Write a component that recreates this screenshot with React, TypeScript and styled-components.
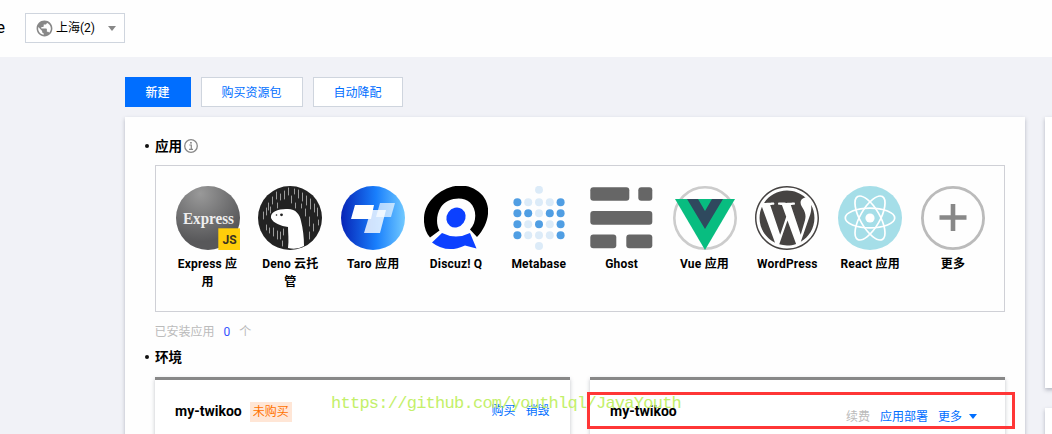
import React from 'react';
import styled, { createGlobalStyle } from 'styled-components';
import { MdPublic } from 'react-icons/md';
import { FaWordpress } from 'react-icons/fa';

const GlobalStyle = createGlobalStyle`
  * { box-sizing: border-box; }
  body {
    margin: 0;
    background: #f1f2f7;
    color: #000;
    font: 12px/18px Roboto, "Noto Sans CJK SC", sans-serif;
    overflow: hidden;
  }
`;

const Page = styled.div`
  position: relative;
  width: 1052px;
  height: 434px;
  overflow: hidden;
`;

const Header = styled.header`
  display: flex;
  align-items: center;
  height: 57px;
  padding-bottom: 1px;
  background: #fefefe;
`;

const ProductName = styled.div`
  display: flex;
  justify-content: flex-end;
  width: 5px;
  margin-right: 20px;
  font-size: 16px;
  font-weight: 400;
  white-space: nowrap;
`;

const RegionSelect = styled.div`
  display: flex;
  align-items: center;
  width: 100px;
  height: 30px;
  padding: 0 8px 0 9px;
  border: 1px solid #cfd5de;
  background: #fff;
  svg { flex: none; color: #888; }
  span { margin-left: 2px; white-space: nowrap; }
`;

const Caret = styled.i<{ $color: string }>`
  width: 0;
  height: 0;
  margin-left: auto;
  border: 4.5px solid transparent;
  border-top: 5px solid ${(p) => p.$color};
  border-bottom: 0;
`;

const Content = styled.main`
  padding: 20px 0 0 125px;
`;

const Toolbar = styled.div`
  display: flex;
  gap: 10px;
  height: 30px;
  margin-bottom: 10px;
`;

const Button = styled.button<{ $primary?: boolean; $width: number }>`
  width: ${(p) => p.$width}px;
  height: 30px;
  padding: 2px 1px 0 0;
  border: 1px solid ${(p) => (p.$primary ? '#006eff' : '#cfd5de')};
  background: ${(p) => (p.$primary ? '#006eff' : '#fff')};
  color: ${(p) => (p.$primary ? '#fff' : '#006eff')};
  font: inherit;
  font-weight: ${(p) => (p.$primary ? 500 : 400)};
`;

const Columns = styled.div`
  display: flex;
  gap: 20px;
`;

const Panel = styled.section`
  flex: none;
  width: 900px;
  height: 400px;
  padding: 19px 20px 0;
  background: #fefefe;
  box-shadow: 0 2px 4px rgba(54, 58, 80, 0.32);
`;

const SideColumn = styled.aside`
  display: flex;
  flex-direction: column;
  flex: none;
  gap: 20px;
`;

const SideCard = styled.div`
  width: 260px;
  height: 271px;
  background: #fff;
  box-shadow: 0 2px 4px rgba(54, 58, 80, 0.32);
`;

const SectionTitle = styled.h3`
  display: flex;
  align-items: center;
  height: 20px;
  margin: 0;
  font-size: 13.6px;
  font-weight: 700;
  &::before {
    content: '';
    width: 4px;
    height: 4px;
    margin-right: 6px;
    border-radius: 50%;
    background: #111;
  }
  svg { margin-left: 2px; }
`;

const AppGrid = styled.div`
  display: flex;
  justify-content: space-between;
  height: 147px;
  margin: 9px 0 0 10px;
  padding: 20px 19px 0 19.55px;
  width: 850px;
  border: 1px solid #cfd0d6;
`;

const AppItem = styled.div`
  width: 64px;
  text-align: center;
  font-weight: 700;
  letter-spacing: 0.2px;
  svg { display: block; width: 64px; height: 64px; margin-bottom: 5px; letter-spacing: 0; }
`;

const Installed = styled.div`
  display: flex;
  gap: 9px;
  margin: 11px 0 6px 9.5px;
  color: #bbb;
  b { color: #3454ff; font-weight: 400; }
`;

const EnvList = styled.div`
  display: flex;
  gap: 20px;
  margin: 10px 0 0 10px;
`;

const EnvCard = styled.article`
  display: flex;
  align-items: flex-start;
  width: 415px;
  height: 130px;
  padding: 22px 20px 0;
  border-top: 3px solid #888;
  background: #fff;
  box-shadow: 0 2px 4px rgba(54, 58, 80, 0.3);
`;

const EnvName = styled.strong`
  font-size: 14px;
  line-height: 19px;
`;

const Tag = styled.span`
  height: 20px;
  margin-left: 8px;
  padding: 0 3px;
  background: #ffe6d6;
  color: #ff7200;
  line-height: 20px;
`;

const Actions = styled.div<{ $drop: number; $right?: number }>`
  display: flex;
  align-items: center;
  gap: 10px;
  margin: ${(p) => p.$drop}px ${(p) => p.$right ?? 0}px 0 auto;
`;

const Action = styled.a<{ $disabled?: boolean }>`
  display: flex;
  align-items: center;
  gap: 7px;
  color: ${(p) => (p.$disabled ? '#bbb' : '#006eff')};
  i { margin-bottom: 2px; }
`;

const Highlight = styled.div`
  position: absolute;
  left: 587px;
  top: 392px;
  width: 428px;
  height: 37px;
  border: 3px solid #ff3636;
`;

const Watermark = styled.div`
  position: absolute;
  left: 331px;
  top: 394px;
  color: #c3f06a;
  font: 17px/20px "Liberation Mono", monospace;
  letter-spacing: -0.74px;
  white-space: nowrap;
`;

const InfoIcon = () => (
  <svg width="14" height="14" viewBox="0 0 14 14" fill="none" stroke="#888">
    <circle cx="7" cy="7" r="6.3" strokeWidth="1.3" />
    <path d="M5.3 6H7.3V10.3M5 10.3H9" strokeWidth="1.2" />
    <rect x="6.1" y="3" width="1.7" height="1.6" fill="#888" stroke="none" />
  </svg>
);

const ExpressIcon = () => (
  <svg viewBox="0 0 64 64">
    <defs>
      <radialGradient id="express" cx="0.38" cy="0.12" r="0.75">
        <stop offset="0" stopColor="#999" />
        <stop offset="1" stopColor="#58585a" />
      </radialGradient>
    </defs>
    <circle cx="32" cy="32" r="32" fill="url(#express)" />
    <text x="32.5" y="37.8" textAnchor="middle" textLength="51" lengthAdjust="spacingAndGlyphs" fontFamily="Liberation Serif" fontSize="16" fontWeight="700" fill="#eee">Express</text>
    <rect x="42.3" y="42.3" width="21.7" height="21.7" fill="#ffce0a" />
    <text x="53.5" y="58" textAnchor="middle" fontFamily="Roboto" fontSize="12" fontWeight="700" fill="#3a3320">JS</text>
  </svg>
);

const rain = [
  [30, 2, 9], [26, 5, 13], [33, 10, 17], [40, 4, 12], [44, 7, 15], [48, 10, 19], [22, 8, 14], [18, 6, 13],
  [19, 17, 22], [14, 11, 18], [10, 17, 24], [8, 22, 29], [5, 26, 33], [12, 21, 27], [15, 42, 50], [19, 45, 53],
  [22, 46, 53], [8, 39, 44], [25, 43, 49], [11, 42, 47], [24, 55, 60], [36, 3, 8], [52, 13, 23], [51, 31, 40],
  [56, 18, 26], [59, 22, 30], [47, 23, 30], [55, 38, 45], [60, 34, 39], [51, 46, 53], [37, 17, 22], [43, 18, 22],
];

const DenoIcon = () => (
  <svg viewBox="0 0 64 64">
    <circle cx="32" cy="32" r="32" fill="#222" />
    {rain.map(([x, a, b]) => (
      <path key={`${x}-${a}`} d={`M${x + 0.5} ${a}V${b}`} stroke="#bbb" strokeWidth="0.8" strokeLinecap="round" />
    ))}
    <path d="M30 62C31 54 30 47 30 41C23 40 15 37 13 32C12 26 20 23 28 23C37 22 42 28 43 35C45 43 46 51 46 60Q39 64 30 62Z" fill="#fff" />
    <circle cx="23.5" cy="28.8" r="1.4" fill="#222" />
    <circle cx="18.5" cy="29" r="0.8" fill="#222" />
  </svg>
);

const TaroIcon = () => (
  <svg viewBox="0 0 64 64">
    <defs>
      <linearGradient id="taro">
        <stop offset="0" stopColor="#0724b6" />
        <stop offset="0.55" stopColor="#197ffc" />
        <stop offset="1" stopColor="#71c9ff" />
      </linearGradient>
    </defs>
    <circle cx="32" cy="32" r="32" fill="url(#taro)" />
    <path d="M14 19H33L30 33H10Z" fill="#fff" />
    <path d="M39 17H54L50 31H35Z" fill="#fff" opacity=".65" />
    <path d="M30 24H45L39 47H23Z" fill="#fff" opacity=".8" />
  </svg>
);

const DiscuzIcon = () => (
  <svg viewBox="0 0 64 64">
    <path d="M6 51.5C-3 41-2 22 9 12C22-1 40-4 52 4C69 14 67 36 53 51L46 43.5C53 36 53 23 46 16.5C38 9 22 13 17 21C12 29 12 39 15.5 44.5Z" fill="#000" />
    <ellipse cx="32" cy="31.5" rx="9.3" ry="10.3" transform="rotate(35 32 31.5)" fill="#0c40ff" />
    <path d="M8 56.5L18 47Q32 54 46 47L52.5 62.5L41 59.5Q23 68 8 56.5Z" fill="#0c40ff" />
  </svg>
);

const darkDots = ['0-0', '0-4', '1-0', '1-1', '1-3', '1-4', '2-0', '2-2', '2-4', '3-0', '3-4'];

const MetabaseIcon = () => (
  <svg viewBox="0 0 64 64">
    <circle cx="32" cy="3.8" r="4" fill="#dcebf8" />
    <circle cx="32" cy="60" r="4" fill="#dcebf8" />
    {[0, 1, 2, 3].map((r) =>
      [0, 1, 2, 3, 4].map((c) => (
        <circle key={`${r}-${c}`} cx={10.4 + c * 10.8} cy={16.2 + r * 11} r="4" fill={darkDots.includes(`${r}-${c}`) ? '#509ee3' : '#dcebf8'} />
      )),
    )}
  </svg>
);

const GhostIcon = () => (
  <svg viewBox="0 0 64 64" fill="#666">
    <rect x="0.3" y="1.3" width="39" height="13.5" rx="3" />
    <rect x="48.3" y="1.3" width="14" height="13.5" rx="3" />
    <rect x="0.3" y="25" width="62" height="13.7" rx="3" />
    <rect x="0.3" y="48.5" width="26" height="13.7" rx="3" />
    <rect x="36.3" y="48.5" width="26" height="13.7" rx="3" />
  </svg>
);

const VueIcon = () => (
  <svg viewBox="0 0 64 64">
    <circle cx="32" cy="32" r="30.7" fill="none" stroke="#ccc" strokeWidth="2.6" />
    <path d="M2 13H62L32 64Z" fill="#08bd80" />
    <path d="M14 13H25L32 25L39 13H50L32 43Z" fill="#2f495e" />
  </svg>
);

const ReactIcon = () => (
  <svg viewBox="0 0 64 64">
    <circle cx="32" cy="32" r="32" fill="#a5dee8" />
    <g fill="none" stroke="#fff" strokeWidth="1.7">
      {[0, 60, 120].map((a) => (
        <ellipse key={a} cx="32" cy="32" rx="24.7" ry="9.8" transform={`rotate(${a} 32 32)`} />
      ))}
    </g>
    <circle cx="32" cy="32" r="4.6" fill="#fff" />
  </svg>
);

const MoreIcon = () => (
  <svg viewBox="0 0 64 64" fill="none">
    <circle cx="32" cy="32" r="30.6" stroke="#bbb" strokeWidth="2.8" />
    <path d="M32 18V45M18.5 31.5H45.5" stroke="#888" strokeWidth="4.6" />
  </svg>
);

const apps = [
  { label: 'Express 应用', icon: <ExpressIcon /> },
  { label: 'Deno 云托管', icon: <DenoIcon /> },
  { label: 'Taro 应用', icon: <TaroIcon /> },
  { label: 'Discuz! Q', icon: <DiscuzIcon /> },
  { label: 'Metabase', icon: <MetabaseIcon /> },
  { label: 'Ghost', icon: <GhostIcon /> },
  { label: 'Vue 应用', icon: <VueIcon /> },
  { label: 'WordPress', icon: <FaWordpress color="#464342" viewBox="8 8 496 496" /> },
  { label: 'React 应用', icon: <ReactIcon /> },
  { label: '更多', icon: <MoreIcon /> },
];

export default function App() {
  return (
    <Page>
      <GlobalStyle />
      <Header>
        <ProductName>e</ProductName>
        <RegionSelect>
          <MdPublic size={19} />
          <span>上海(2)</span>
          <Caret $color="#888" />
        </RegionSelect>
      </Header>
      <Content>
        <Toolbar>
          <Button $primary $width={66}>新建</Button>
          <Button $width={102}>购买资源包</Button>
          <Button $width={90}>自动降配</Button>
        </Toolbar>
        <Columns>
          <Panel>
            <SectionTitle>应用<InfoIcon /></SectionTitle>
            <AppGrid>
              {apps.map((app) => (
                <AppItem key={app.label}>{app.icon}{app.label}</AppItem>
              ))}
            </AppGrid>
            <Installed><span>已安装应用</span><b>0</b><span>个</span></Installed>
            <SectionTitle>环境</SectionTitle>
            <EnvList>
              <EnvCard>
                <EnvName>my-twikoo</EnvName>
                <Tag>未购买</Tag>
                <Actions $drop={0} $right={0.5}>
                  <Action>购买</Action>
                  <Action>销毁</Action>
                </Actions>
              </EnvCard>
              <EnvCard>
                <EnvName>my-twikoo</EnvName>
                <Actions $drop={6} $right={8}>
                  <Action $disabled>续费</Action>
                  <Action>应用部署</Action>
                  <Action>更多<Caret $color="#006eff" /></Action>
                </Actions>
              </EnvCard>
            </EnvList>
          </Panel>
          <SideColumn>
            <SideCard />
            <SideCard />
          </SideColumn>
        </Columns>
      </Content>
      <Watermark>https://github.com/youthlql/JavaYouth</Watermark>
      <Highlight />
    </Page>
  );
}
